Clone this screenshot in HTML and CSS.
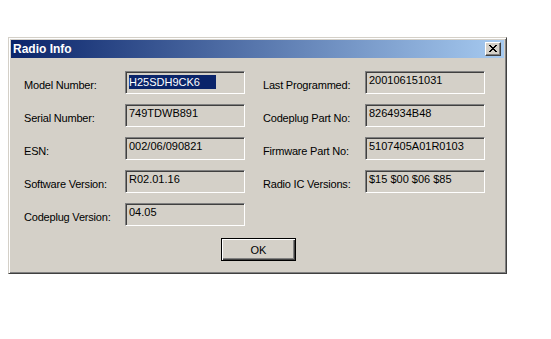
FILE: index.html
```html
<!DOCTYPE html>
<html>
<head>
<meta charset="utf-8">
<link rel="stylesheet" href="styles.css">
</head>
<body>
<div class="window">
  <div class="titlebar">
    <span class="title">Radio Info</span>
    <button class="close" aria-label="Close">
      <svg width="8" height="7" viewBox="0 0 8 7" shape-rendering="crispEdges">
        <path fill="#000" d="M0 0h2v1H0zM6 0h2v1H6zM1 1h2v1H1zM5 1h2v1H5zM2 2h4v1H2zM3 3h2v1H3zM2 4h4v1H2zM1 5h2v1H1zM5 5h2v1H5zM0 6h2v1H0zM6 6h2v1H6z"/>
      </svg>
    </button>
  </div>
  <div class="content">
    <div class="grid">
      <div class="label">Model Number:</div>
      <div class="field"><span class="sel">H25SDH9CK6</span></div>
      <div class="label right">Last Programmed:</div>
      <div class="field">200106151031</div>

      <div class="label">Serial Number:</div>
      <div class="field">749TDWB891</div>
      <div class="label right">Codeplug Part No:</div>
      <div class="field">8264934B48</div>

      <div class="label">ESN:</div>
      <div class="field">002/06/090821</div>
      <div class="label right">Firmware Part No:</div>
      <div class="field">5107405A01R0103</div>

      <div class="label">Software Version:</div>
      <div class="field">R02.01.16</div>
      <div class="label right">Radio IC Versions:</div>
      <div class="field">$15 $00 $06 $85</div>

      <div class="label">Codeplug Version:</div>
      <div class="field">04.05</div>
    </div>
    <div class="actions">
      <button class="ok">OK</button>
    </div>
  </div>
</div>
</body>
</html>
```

FILE: styles.css
```css
html, body {
  margin: 0;
  background: #ffffff;
}
body {
  padding: 37px 0 0 8px;
  font-family: "Liberation Sans", Arial, sans-serif;
  font-size: 11px;
  line-height: 13px;
  color: #000;
}
.window {
  box-sizing: border-box;
  width: 499px;
  height: 237px;
  background: #d4d0c8;
  border: 1px solid;
  border-color: #d4d0c8 #404040 #404040 #d4d0c8;
  box-shadow: inset 1px 1px #ffffff, inset -1px -1px #808080;
  padding: 2px;
  display: flex;
  flex-direction: column;
}
.titlebar {
  height: 18px;
  background: linear-gradient(to right, #0a246a, #a6caf0);
  display: flex;
  align-items: center;
  justify-content: space-between;
  padding: 0 3px 0 2px;
}
.title {
  color: #fff;
  font-weight: bold;
  font-size: 12px;
}
.close {
  box-sizing: border-box;
  width: 16px;
  height: 14px;
  padding: 0;
  margin: 0;
  background: #d4d0c8;
  border: 1px solid;
  border-color: #ffffff #404040 #404040 #ffffff;
  box-shadow: inset -1px -1px #808080;
  display: flex;
  align-items: center;
  justify-content: center;
}
.close svg {
  display: block;
  margin: 0 1px 1px 0;
}
.content {
  padding: 13px 0 0 13px;
  display: flex;
  flex-direction: column;
}
.grid {
  display: grid;
  grid-template-columns: 101px 120px 120px 120px;
  grid-auto-rows: 23px;
  row-gap: 10px;
}
.label {
  padding-top: 8px;
  white-space: nowrap;
  letter-spacing: -0.2px;
}
.label.right {
  padding-left: 18px;
}
.field {
  box-sizing: border-box;
  height: 23px;
  border: 1px solid;
  border-color: #808080 #ffffff #ffffff #808080;
  box-shadow: inset 1px 1px #404040, inset -1px -1px #d4d0c8;
  background: #d4d0c8;
  padding: 2px 0 0 3px;
  white-space: nowrap;
}
.sel {
  display: inline-block;
  width: 87px;
  margin-top: 1px;
  background: #0a246a;
  color: #fff;
  line-height: 14px;
}
.actions {
  display: flex;
  justify-content: center;
  margin-top: 12px;
  padding-right: 11px;
}
.ok {
  box-sizing: border-box;
  width: 75px;
  height: 23px;
  margin: 0;
  padding: 0;
  font-family: inherit;
  font-size: 11px;
  color: #000;
  background: #d4d0c8;
  border: 1px solid #000;
  box-shadow: inset 1px 1px #ffffff, inset -1px -1px #404040, inset -2px -2px #808080;
}
```
